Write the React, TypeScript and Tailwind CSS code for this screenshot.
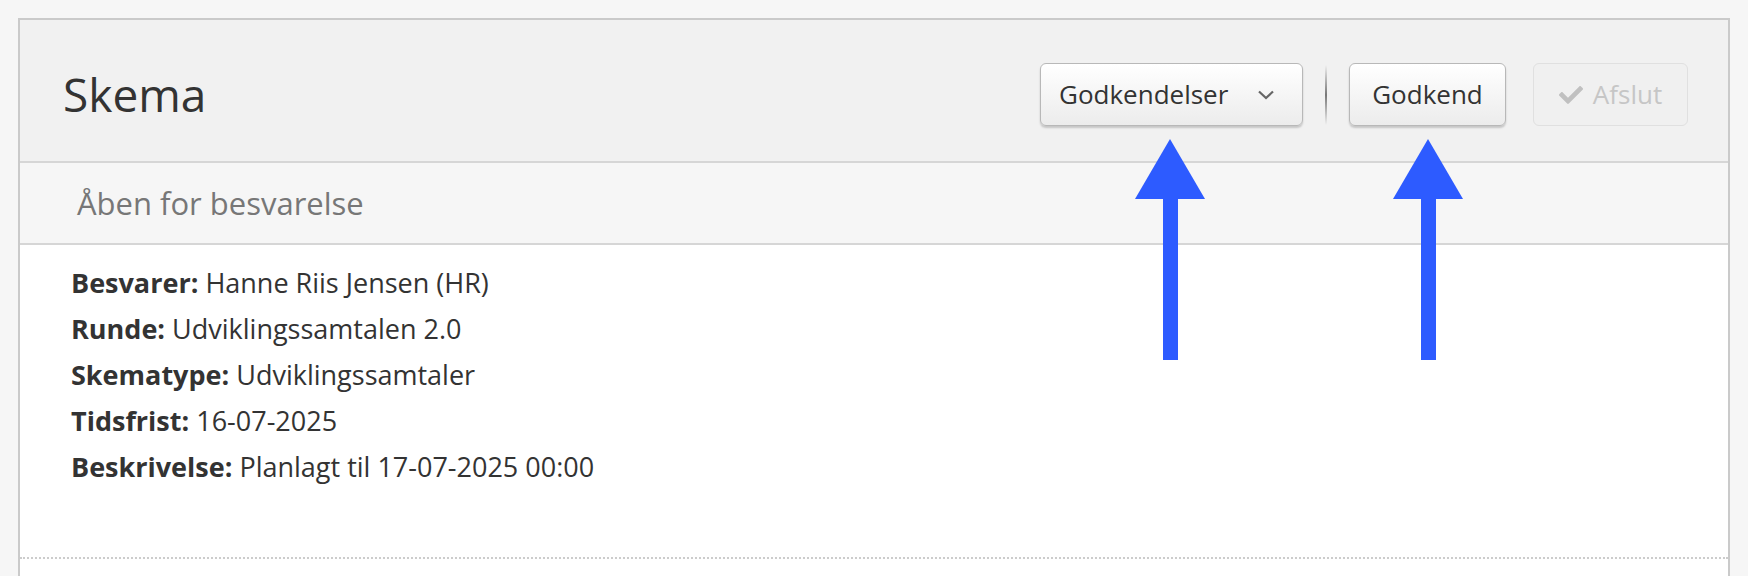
import React from "react";
import { FaCheck } from "react-icons/fa";

const rows: [string, string][] = [
  ["Besvarer:", "Hanne Riis Jensen (HR)"],
  ["Runde:", "Udviklingssamtalen 2.0"],
  ["Skematype:", "Udviklingssamtaler"],
  ["Tidsfrist:", "16-07-2025"],
  ["Beskrivelse:", "Planlagt til 17-07-2025 00:00"],
];

function Arrow({ left }: { left: number }) {
  return (
    <svg
      className="absolute"
      style={{ left, top: 139 }}
      width="70"
      height="221"
      viewBox="0 0 70 221"
    >
      <polygon points="35,0 70,60 0,60" fill="#2d5bff" />
      <rect x="28" y="59" width="15" height="162" fill="#2d5bff" />
    </svg>
  );
}

export default function App() {
  return (
    <div
      className="relative w-[1748px] h-[576px] overflow-hidden bg-[#f6f6f6] pt-[18px] px-[18px]"
      style={{ fontFamily: "'Open Sans', Lato, sans-serif" }}
    >
      <div className="h-[600px] border-2 border-[#cacaca] bg-white">
        <div className="flex items-center justify-between bg-[#f1f1f1] border-b-2 border-[#d6d6d6] h-[143px] pl-[43px] pr-[40px]">
          <h1 className="text-[46px] text-[#333] leading-none mt-[6px]">Skema</h1>
          <div className="flex items-center mt-[8px]">
            <button className="flex items-center h-[63px] w-[263px] pl-[18px] pr-[26px] rounded-[6px] border border-[#b8b8b8] bg-gradient-to-b from-white to-[#ececec] shadow-[0_2px_2px_rgba(0,0,0,0.18)] text-[26px] text-[#333]">
              <span>Godkendelser</span>
              <svg className="ml-auto" width="20" height="12" viewBox="0 0 20 12">
                <polyline points="3,2.5 10,9 17,2.5" fill="none" stroke="#666" strokeWidth="2.2" />
              </svg>
            </button>
            <div className="mx-[22px] w-[2px] h-[60px] bg-gradient-to-b from-transparent via-[#777] to-transparent" />
            <button className="h-[63px] w-[157px] rounded-[6px] border border-[#b8b8b8] bg-gradient-to-b from-white to-[#ececec] shadow-[0_2px_2px_rgba(0,0,0,0.18)] text-[26px] text-[#333]">
              Godkend
            </button>
            <button className="ml-[27px] flex items-center justify-center gap-[10px] h-[63px] w-[155px] rounded-[6px] border border-[#e0e0e0] bg-[#f0f0f0] text-[26px] text-[#c6c6c6]">
              <FaCheck className="w-[24px] h-[24px] text-[#c0c0c0]" />
              <span>Afslut</span>
            </button>
          </div>
        </div>
        <div className="flex items-center h-[82px] bg-[#f6f6f6] border-b-2 border-[#d6d6d6] pl-[57px] text-[31px] text-[#777]">
          Åben for besvarelse
        </div>
        <div className="h-[314px] border-b-2 border-dotted border-[#cccccc] pl-[51px] pt-[15px] text-[27px] text-[#333]">
          {rows.map(([k, v]) => (
            <div key={k} className="h-[46px] leading-[46px]">
              <span className="font-bold">{k}</span> {v}
            </div>
          ))}
        </div>
      </div>
      <Arrow left={1135} />
      <Arrow left={1393} />
    </div>
  );
}
